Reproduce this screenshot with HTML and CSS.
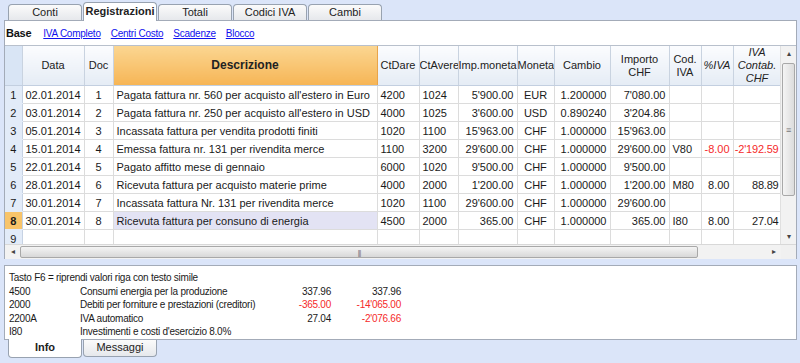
FILE: index.html
```html
<!DOCTYPE html>
<html>
<head>
    <title>Registrazioni</title>
    <link rel="stylesheet" href="styles.css">
</head>
<body>
    <!-- Schede superiori -->
    <div class="tabs">
        <div class="tab">Conti</div>
        <div class="tab active">Registrazioni</div>
        <div class="tab">Totali</div>
        <div class="tab">Codici IVA</div>
        <div class="tab">Cambi</div>
    </div>

    <div class="panel">
        <div class="views">
            <span class="view current">Base</span>
            <a class="view">IVA Completo</a>
            <a class="view">Centri Costo</a>
            <a class="view">Scadenze</a>
            <a class="view">Blocco</a>
        </div>

        <div class="grid">
            <div class="grid-body">
                <table class="table">
                    <colgroup>
                        <col style="width:17px">
                        <col style="width:62px">
                        <col style="width:29px">
                        <col style="width:264px">
                        <col style="width:42px">
                        <col style="width:39px">
                        <col style="width:59px">
                        <col style="width:37px">
                        <col style="width:56px">
                        <col style="width:59px">
                        <col style="width:32px">
                        <col style="width:32px">
                        <col style="width:48px">
                    </colgroup>
                    <thead>
                        <tr>
                            <th class="rownum"></th>
                            <th>Data</th>
                            <th>Doc</th>
                            <th class="sorted">Descrizione</th>
                            <th>CtDare</th>
                            <th>CtAvere</th>
                            <th>Imp.moneta</th>
                            <th>Moneta</th>
                            <th>Cambio</th>
                            <th>Importo<br>CHF</th>
                            <th>Cod.<br>IVA</th>
                            <th class="it">%IVA</th>
                            <th class="it cut">IVA<br>Contab.<br>CHF</th>
                        </tr>
                    </thead>
                    <tbody id="rows"></tbody>
                </table>
            </div>
            <div class="vscroll">
                <div class="arrow">&#9652;</div>
                <div class="vthumb"><span class="grip">&#8801;</span></div>
                <div class="vtrack"></div>
                <div class="arrow">&#9662;</div>
            </div>
        </div>
        <div class="hscroll">
            <div class="arrow">&#9666;</div>
            <div class="hthumb"><span class="grip">|||</span></div>
            <div class="htrack"></div>
            <div class="arrow">&#9656;</div>
            <div class="corner"></div>
        </div>
    </div>

    <!-- Pannello informazioni -->
    <div class="info">
        <div class="info-line">Tasto F6 = riprendi valori riga con testo simile</div>
        <div class="info-line">
            <span class="acc">4500</span><span class="desc">Consumi energia per la produzione</span>
            <span class="amt">337.96</span><span class="amt">337.96</span>
        </div>
        <div class="info-line">
            <span class="acc">2000</span><span class="desc">Debiti per forniture e prestazioni (creditori)</span>
            <span class="amt neg">-365.00</span><span class="amt neg">-14'065.00</span>
        </div>
        <div class="info-line">
            <span class="acc">2200A</span><span class="desc">IVA automatico</span>
            <span class="amt">27.04</span><span class="amt neg">-2'076.66</span>
        </div>
        <div class="info-line">
            <span class="acc">I80</span><span class="desc">Investimenti e costi d'esercizio 8.0%</span>
        </div>
    </div>

    <div class="tabs bottom">
        <div class="tab active">Info</div>
        <div class="tab">Messaggi</div>
    </div>

    <script>
        // Registrazioni del giornale
        const registrazioni = [
            ['02.01.2014', '1', "Pagata fattura nr. 560 per acquisto all'estero in Euro", '4200', '1024', "5'900.00", 'EUR', '1.200000', "7'080.00", '', '', ''],
            ['03.01.2014', '2', "Pagata fattura nr. 250 per acquisto all'estero in USD", '4000', '1025', "3'600.00", 'USD', '0.890240', "3'204.86", '', '', ''],
            ['05.01.2014', '3', 'Incassata fattura per vendita prodotti finiti', '1020', '1100', "15'963.00", 'CHF', '1.000000', "15'963.00", '', '', ''],
            ['15.01.2014', '4', 'Emessa fattura nr. 131 per rivendita merce', '1100', '3200', "29'600.00", 'CHF', '1.000000', "29'600.00", 'V80', '-8.00', "-2'192.59"],
            ['22.01.2014', '5', 'Pagato affitto mese di gennaio', '6000', '1020', "9'500.00", 'CHF', '1.000000', "9'500.00", '', '', ''],
            ['28.01.2014', '6', 'Ricevuta fattura per acquisto materie prime', '4000', '2000', "1'200.00", 'CHF', '1.000000', "1'200.00", 'M80', '8.00', '88.89'],
            ['30.01.2014', '7', 'Incassata fattura Nr. 131 per rivendita merce', '1020', '1100', "29'600.00", 'CHF', '1.000000', "29'600.00", '', '', ''],
            ['30.01.2014', '8', 'Ricevuta fattura per consuno di energia', '4500', '2000', '365.00', 'CHF', '1.000000', '365.00', 'I80', '8.00', '27.04'],
            ['', '', '', '', '', '', '', '', '', '', '', '']
        ];

        // Allineamento delle colonne
        const align = ['left', 'center', 'left', 'left', 'left', 'right', 'center', 'right', 'right', 'left', 'right', 'right tight'];
        const selected = 8;

        const tbody = document.getElementById('rows');
        tbody.innerHTML = registrazioni.map((r, i) => {
            const n = i + 1;
            const cells = r.map((v, c) => {
                let cls = align[c];
                if (v.startsWith('-')) cls += ' neg';
                if (n === selected && c === 2) cls += ' focus';
                return `<td class="${cls}">${v}</td>`;
            }).join('');
            return `<tr><td class="rownum${n === selected ? ' sel' : ''}">${n}</td>${cells}</tr>`;
        }).join('');
    </script>
</body>
</html>
```

FILE: styles.css
```css
:root {
    --bg: #dbe5f9;
    --border: #a3abb8;
    --line: #dcdcdc;
    --red: #f52a2a;
}

body {
    margin: 0;
    background: var(--bg);
    font-family: 'Liberation Sans', Arial, sans-serif;
    font-size: 11px;
    color: #1a1a1a;
    width: 800px;
    height: 363px;
    overflow: hidden;
}

/* Schede */
.tabs {
    display: flex;
    align-items: flex-end;
    height: 20px;
    padding-left: 8px;
    gap: 1px;
}

.tab {
    width: 72px;
    height: 15px;
    line-height: 15px;
    text-align: center;
    border: 1px solid #98a2b0;
    border-bottom: none;
    border-radius: 4px 4px 0 0;
    background: linear-gradient(#fbfbfb, #e6e8ec);
    color: #222;
}

.tab.active {
    height: 18px;
    line-height: 17px;
    background: #fff;
    font-weight: bold;
    position: relative;
    z-index: 1;
    margin-bottom: -1px;
}

.tabs.bottom {
    align-items: flex-start;
    height: 18px;
}

.tabs.bottom .tab {
    border: 1px solid #98a2b0;
    border-top: none;
    border-radius: 0 0 4px 4px;
    height: 16px;
}

.tabs.bottom .tab.active {
    height: 18px;
    margin-top: -1px;
    margin-bottom: 0;
}

/* Pannello registrazioni */
.panel {
    margin: 0 3px 0 4px;
    background: #fff;
    border: 1px solid var(--border);
    height: 237px;
}

.views {
    height: 24px;
    display: flex;
    align-items: center;
    gap: 10px;
    padding-left: 1px;
    font-size: 10px;
    letter-spacing: -0.25px;
}

.view {
    color: #1010ee;
    text-decoration: underline;
}

.view.current {
    color: #111;
    font-weight: bold;
    font-size: 11px;
    text-decoration: none;
    margin-right: 2px;
}

.grid {
    display: flex;
    height: 198px;
    border-top: 1px solid #b8c0cc;
}

.grid-body {
    width: 776px;
    overflow: hidden;
}

.table {
    border-collapse: collapse;
    table-layout: fixed;
    width: 776px;
}

.table th {
    height: 35px;
    padding: 0;
    font-weight: normal;
    font-size: 11px;
    line-height: 13px;
    color: #222;
    background: linear-gradient(#fbfcfe, #e5ecf5);
    border-right: 1px solid #c9d3e0;
    border-bottom: 1px solid #c3cfe0;
    overflow: hidden;
    white-space: nowrap;
}

.table th.rownum {
    background: #d9e5f5;
}

.table th.sorted {
    font-weight: bold;
    font-size: 12px;
    background: linear-gradient(#fbd691, #f6b556);
    border-right-color: #e8a44a;
}

.table th.it {
    font-style: italic;
}

.table th.cut {
    vertical-align: middle;
}

.table td {
    height: 17px;
    padding: 0 3px;
    font-size: 11px;
    border-right: 1px solid var(--line);
    border-bottom: 1px solid var(--line);
    white-space: nowrap;
    overflow: hidden;
}

.table td.tight {
    padding: 0 2px 0 0;
    letter-spacing: -0.2px;
}

.table td.rownum {
    padding: 0;
    text-align: center;
    font-size: 11px;
    background: #e2ebf8;
    border-right: 1px solid #c6d2e3;
    border-bottom: 1px solid #e2ebf8;
}

.table td.rownum.sel {
    background: #f8c46a;
    font-weight: bold;
}

.left { text-align: left; }
.center { text-align: center; }
.right { text-align: right; }

.table td.focus {
    background: #e3e3f4;
}

.neg {
    color: var(--red);
}

/* Barre di scorrimento */
.vscroll {
    width: 15px;
    display: flex;
    flex-direction: column;
    background: #f2f2f2;
    border-left: 1px solid #e0e0e0;
}

.arrow {
    height: 15px;
    line-height: 15px;
    text-align: center;
    font-size: 8px;
    color: #444;
    flex: none;
}

.vthumb {
    height: 131px;
    margin: 2px 1px 0;
    border: 1px solid #a8a8a8;
    border-radius: 2px;
    background: linear-gradient(90deg, #f4f4f4, #dcdcdc);
    display: flex;
    align-items: center;
    justify-content: center;
}

.grip {
    font-size: 9px;
    color: #777;
}

.vtrack {
    flex: 1;
}

.hscroll {
    display: flex;
    height: 14px;
    background: #f2f2f2;
    border-top: 1px solid #d8d8d8;
}

.hscroll .arrow {
    width: 15px;
    height: 14px;
    line-height: 14px;
}

.hthumb {
    width: 676px;
    margin: 1px 0;
    border: 1px solid #a8a8a8;
    border-radius: 2px;
    background: linear-gradient(#f4f4f4, #d8d8d8);
    display: flex;
    align-items: center;
    justify-content: center;
}

.hthumb .grip {
    font-size: 7px;
    letter-spacing: -1px;
}

.htrack {
    flex: 1;
}

.corner {
    width: 15px;
    background: #f0f0f0;
}

/* Pannello info */
.info {
    margin: 6px 3px 0 4px;
    background: #fff;
    border: 1px solid var(--border);
    height: 75px;
    padding: 5px 0 0 4px;
    box-sizing: border-box;
    font-size: 10px;
    letter-spacing: -0.25px;
}

.info-line {
    display: flex;
    height: 13.5px;
    line-height: 13px;
    white-space: nowrap;
}

.acc {
    width: 71px;
}

.desc {
    width: 190px;
}

.amt {
    width: 61px;
    text-align: right;
}

.amt + .amt {
    width: 70px;
}
```
